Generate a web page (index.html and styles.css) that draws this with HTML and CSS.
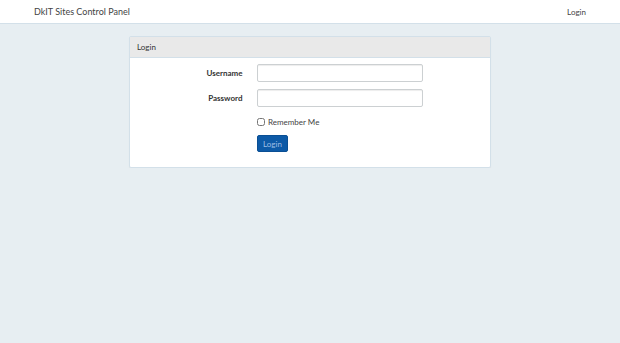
FILE: index.html
```html
<!DOCTYPE html>
<html lang="en">
<head>
  <meta charset="UTF-8">
  <meta name="viewport" content="width=device-width, initial-scale=1.0">
  <title>DkIT Sites Control Panel</title>
  <link rel="stylesheet" href="styles.css">
</head>
<body>
  <nav class="navbar">
    <div class="navbar-inner">
      <a class="brand" href="#">DkIT Sites Control Panel</a>
      <a class="nav-link" href="#">Login</a>
    </div>
  </nav>
  <div class="container">
    <div class="panel">
      <div class="panel-heading">Login</div>
      <div class="panel-body">
        <form class="form">
          <div class="form-group">
            <label class="form-label" for="username">Username</label>
            <input class="form-control" id="username" type="text">
          </div>
          <div class="form-group">
            <label class="form-label" for="password">Password</label>
            <input class="form-control" id="password" type="password">
          </div>
          <div class="form-group">
            <span></span>
            <label class="checkbox"><input type="checkbox"> Remember Me</label>
          </div>
          <div class="form-group">
            <span></span>
            <div><button class="button" type="button">Login</button></div>
          </div>
        </form>
      </div>
    </div>
  </div>
</body>
</html>
```

FILE: styles.css
```css
body {
  margin: 0;
  font-family: 'Lato', 'Open Sans', sans-serif;
  font-size: 8px;
  background: #e7eef2;
  color: #333;
}
a {
  text-decoration: none;
  color: #333;
}
.navbar {
  background: #fff;
  height: 23px;
  border-bottom: 1px solid #d3e0e9;
}
.navbar-inner {
  height: 100%;
  display: flex;
  align-items: center;
  justify-content: space-between;
  padding: 0 34px;
}
.brand {
  font-size: 9px;
  color: #444;
}
.nav-link {
  font-size: 8px;
  color: #444;
}
.container {
  width: 362px;
  margin: 12px auto 0;
}
.panel {
  background: #fff;
  border: 1px solid #d3e0e9;
  border-radius: 2px;
  box-shadow: 0 1px 1px rgba(0,0,0,0.05);
}
.panel-heading {
  background: #e9e9e9;
  border-bottom: 1px solid #d3e0e9;
  height: 20px;
  line-height: 20px;
  padding: 0 7px;
  font-size: 8px;
  color: #333;
}
.panel-body {
  padding: 6px 0 8px;
}
.form-group {
  display: grid;
  grid-template-columns: 120px 180px;
  align-items: center;
  margin-bottom: 7px;
}
.form-label {
  text-align: right;
  padding-right: 7.5px;
  font-weight: bold;
  font-size: 8px;
}
.form-control {
  box-sizing: border-box;
  margin-left: 7px;
  width: 166px;
  height: 18px;
  border: 1px solid #ccd0d2;
  border-radius: 2px;
  box-shadow: inset 0 1px 1px rgba(0,0,0,0.075);
  padding: 0 6px;
  font-size: 8px;
}
.checkbox {
  margin-left: 7px;
  display: flex;
  align-items: center;
  gap: 3px;
  font-size: 8px;
  color: #444;
  height: 13px;
  margin-top: 1px;
}
.checkbox input {
  margin: 0;
  width: 8px;
  height: 8px;
}
.button {
  margin-left: 7px;
  background: #0d5aa7;
  color: #9fbfe4;
  border: 1px solid #0a4f94;
  border-radius: 2px;
  height: 17px;
  padding: 0 5px;
  font-family: 'Lato', sans-serif;
  font-size: 8px;
  cursor: pointer;
}
```
